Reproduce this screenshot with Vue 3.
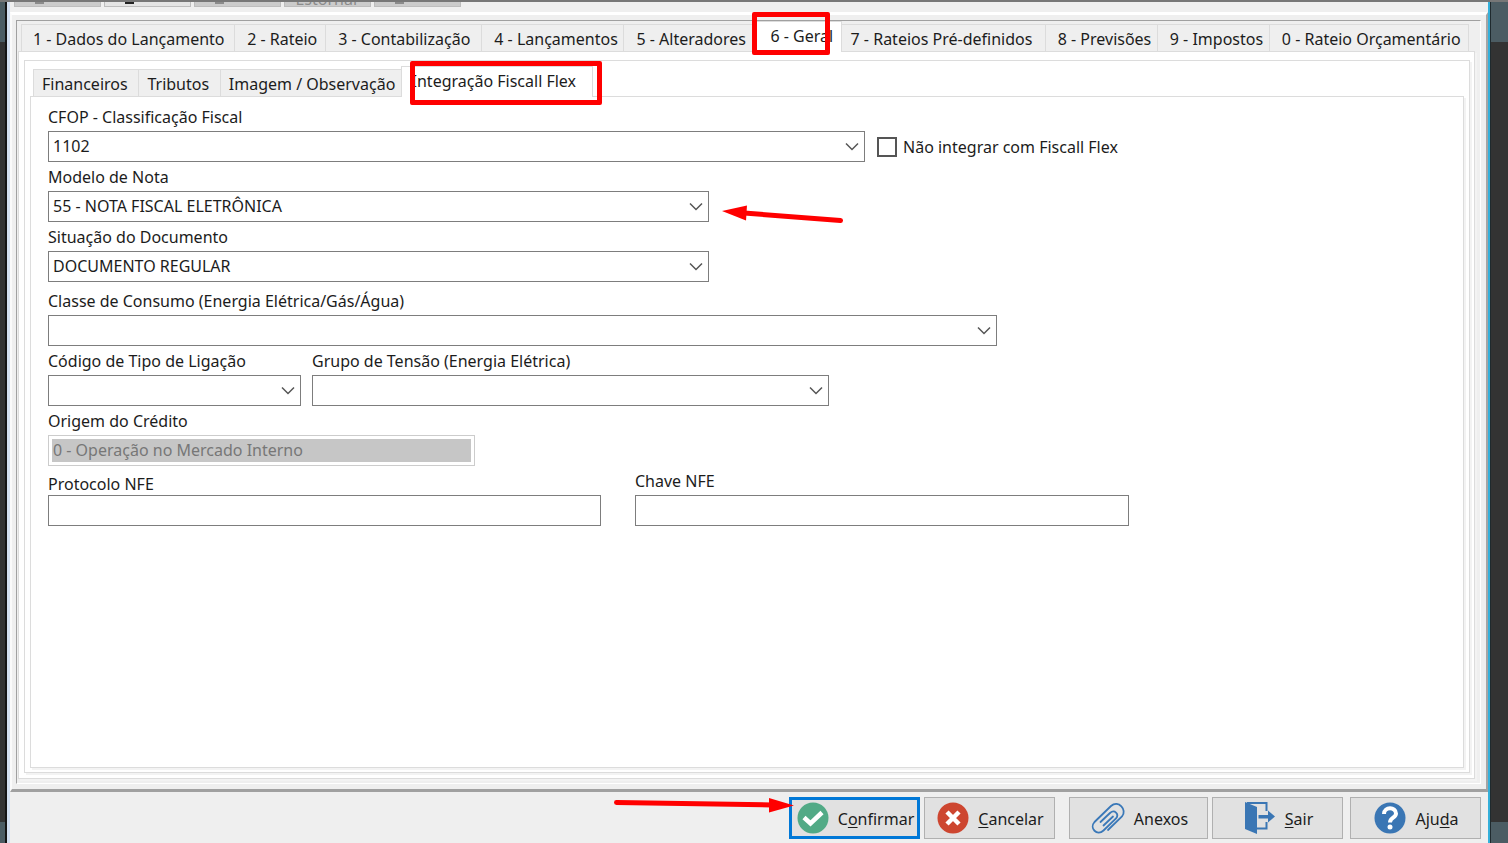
<template>
  <div class="desktop">
    <div class="backdrop backdrop-left"></div>
    <main class="window">
      <div class="toolbar">
        <button v-for="(item, i) in toolbar" :key="i" class="tool" :class="{ enabled: item.enabled }" :disabled="!item.enabled">
          <span v-if="item.label">{{ item.label }}</span>
          <span v-else class="mark"></span>
        </button>
      </div>

      <section class="workspace">
        <div class="frame">
          <div class="tabs main-tabs" role="tablist">
            <button
              v-for="tab in mainTabs"
              :key="tab"
              class="tab"
              :class="{ active: tab === mainTab }"
              role="tab"
              :aria-selected="tab === mainTab"
            >
              {{ tab }}
              <span v-if="tab === mainTab" class="highlight highlight-main"></span>
            </button>
          </div>

          <div class="panel">
            <div class="panel inner-panel">
              <div class="tabs sub-tabs" role="tablist">
                <button
                  v-for="tab in subTabs"
                  :key="tab"
                  class="tab"
                  :class="{ active: tab === subTab }"
                  role="tab"
                  :aria-selected="tab === subTab"
                >
                  {{ tab }}
                  <span v-if="tab === subTab" class="highlight highlight-sub"></span>
                </button>
              </div>

              <form class="panel form" @submit.prevent>
                <div class="row row-cfop">
                  <div class="field">
                    <label for="cfop">CFOP - Classificação Fiscal</label>
                    <div class="combo">
                      <select id="cfop"><option>1102</option></select>
                      <svg class="chevron" viewBox="0 0 14 9"><path d="M1 1.5 7 7.5 13 1.5" /></svg>
                    </div>
                  </div>
                  <label class="check">
                    <input v-model="skipFiscall" type="checkbox" />
                    Não integrar com Fiscall Flex
                  </label>
                </div>

                <div class="row row-medium">
                  <div class="field">
                    <label for="modelo">Modelo de Nota</label>
                    <div class="combo">
                      <select id="modelo"><option>55 - NOTA FISCAL ELETRÔNICA</option></select>
                      <svg class="chevron" viewBox="0 0 14 9"><path d="M1 1.5 7 7.5 13 1.5" /></svg>
                      <svg class="arrow arrow-left" viewBox="0 0 122 20">
                        <path d="M22 8 118.5 15.5" />
                        <polygon points="0,6 25,0.5 24,15.5" />
                      </svg>
                    </div>
                  </div>
                </div>

                <div class="row row-medium">
                  <div class="field">
                    <label for="situacao">Situação do Documento</label>
                    <div class="combo">
                      <select id="situacao"><option>DOCUMENTO REGULAR</option></select>
                      <svg class="chevron" viewBox="0 0 14 9"><path d="M1 1.5 7 7.5 13 1.5" /></svg>
                    </div>
                  </div>
                </div>

                <div class="row row-wide spaced">
                  <div class="field">
                    <label for="classe">Classe de Consumo (Energia Elétrica/Gás/Água)</label>
                    <div class="combo">
                      <select id="classe"><option></option></select>
                      <svg class="chevron" viewBox="0 0 14 9"><path d="M1 1.5 7 7.5 13 1.5" /></svg>
                    </div>
                  </div>
                </div>

                <div class="row row-energy">
                  <div class="field">
                    <label for="ligacao">Código de Tipo de Ligação</label>
                    <div class="combo">
                      <select id="ligacao"><option></option></select>
                      <svg class="chevron" viewBox="0 0 14 9"><path d="M1 1.5 7 7.5 13 1.5" /></svg>
                    </div>
                  </div>
                  <div class="field">
                    <label for="tensao">Grupo de Tensão (Energia Elétrica)</label>
                    <div class="combo">
                      <select id="tensao"><option></option></select>
                      <svg class="chevron" viewBox="0 0 14 9"><path d="M1 1.5 7 7.5 13 1.5" /></svg>
                    </div>
                  </div>
                </div>

                <div class="row row-origin">
                  <div class="field">
                    <label for="origem">Origem do Crédito</label>
                    <input id="origem" type="text" value="0 - Operação no Mercado Interno" disabled />
                  </div>
                </div>

                <div class="row row-nfe">
                  <div class="field tight">
                    <label for="protocolo">Protocolo NFE</label>
                    <input id="protocolo" v-model="protocolo" type="text" />
                  </div>
                  <div class="field">
                    <label for="chave">Chave NFE</label>
                    <input id="chave" v-model="chave" type="text" />
                  </div>
                </div>
              </form>
            </div>
          </div>
        </div>
      </section>

      <footer class="actions">
        <button class="action primary">
          <svg class="icon" viewBox="0 0 32 32">
            <circle cx="16" cy="16" r="15.5" fill="#52aa86" />
            <path d="M7 15.500 13.500 21.500 25 10.500" fill="none" stroke="#fff" stroke-width="4.500" />
          </svg>
          <span>C<u>o</u>nfirmar</span>
          <svg class="arrow arrow-right" viewBox="0 0 180 16">
            <path d="M2.5 5.5 158 8" />
            <polygon points="180,8.5 155,1 155,15.5" />
          </svg>
        </button>
        <button class="action">
          <svg class="icon" viewBox="0 0 32 32">
            <circle cx="16" cy="16" r="15.5" fill="#cd4630" />
            <path d="M10 10 22 22M22 10 10 22" fill="none" stroke="#fff" stroke-width="4.5" />
          </svg>
          <span><u>C</u>ancelar</span>
        </button>
        <button class="action attach">
          <svg class="icon icon-wide" viewBox="0 0 34 32">
            <path
              d="M17 28 31 14.500C36.500 8 27.500-2.500 20 4L3.500 20C-2 26 6 34.500 12.500 28.500L25 16.500C28.500 12 23.500 7 19 11L9.500 20M12.500 23.500 22 14.500"
              fill="none"
              stroke="#3a78b8"
              stroke-width="1.800"
              stroke-linecap="round"
            />
          </svg>
          <span>Anexos</span>
        </button>
        <button class="action">
          <svg class="icon" viewBox="0 0 32 32">
            <path d="M1 0 13 5V32L1 27Z" fill="#3a76b4" />
            <path d="M3 1H22.500V9M22.500 20V26.500H13" fill="none" stroke="#3a76b4" stroke-width="2" />
            <path d="M14.500 13H24V8.500L31 14.500 24 20.500V16.500H14.500Z" fill="#3a76b4" />
          </svg>
          <span><u>S</u>air</span>
        </button>
        <button class="action help">
          <svg class="icon" viewBox="0 0 32 32">
            <circle cx="16" cy="16" r="15.5" fill="#3a76b4" />
            <path d="M10 12C10 4.500 22 4.500 22 11.500C22 16 16 15.500 16 20.500" fill="none" stroke="#fff" stroke-width="4" />
            <circle cx="16" cy="25" r="2.500" fill="#fff" />
          </svg>
          <span>Aju<u>d</u>a</span>
        </button>
      </footer>
    </main>
    <div class="backdrop backdrop-right"></div>
  </div>
</template>

<script setup>
import { ref } from 'vue'

const toolbar = [
  { enabled: false },
  { enabled: true },
  { enabled: false },
  { enabled: false, label: 'Estornar' },
  { enabled: false }
]

const mainTabs = [
  '1 - Dados do Lançamento',
  '2 - Rateio',
  '3 - Contabilização',
  '4 - Lançamentos',
  '5 - Alteradores',
  '6 - Geral',
  '7 - Rateios Pré-definidos',
  '8 - Previsões',
  '9 - Impostos',
  '0 - Rateio Orçamentário'
]
const subTabs = ['Financeiros', 'Tributos', 'Imagem / Observação', 'Integração Fiscall Flex']

const mainTab = ref('6 - Geral')
const subTab = ref('Integração Fiscall Flex')

const skipFiscall = ref(false)
const protocolo = ref('')
const chave = ref('')
</script>

<style>
body {
  margin: 0;
}
</style>

<style scoped>
.desktop {
  display: flex;
  box-sizing: border-box;
  min-height: 100vh;
  border-top: 2px solid #777;
  font-family: "Noto Sans", "Open Sans", sans-serif;
  font-size: 16px;
  line-height: 20px;
  color: #1c1c1c;
  overflow: hidden;
}

.desktop *,
.desktop *::before {
  box-sizing: border-box;
}

button,
input,
select {
  margin: 0;
  font: inherit;
  color: inherit;
}

.backdrop {
  flex: none;
  background: linear-gradient(#4b5c63 40px, #333 40px, #333 calc(100% - 21px), #4b5c63 calc(100% - 21px));
}

.backdrop-left {
  width: 7px;
  border-right: 2px solid #141414;
}

.backdrop-right {
  width: 18px;
  border-left: 1px solid #1f2a2e;
}

.window {
  flex: 1;
  min-width: 0;
  display: flex;
  flex-direction: column;
  background: #efefef;
  border-left: 3px solid #d3dff0;
  border-right: 2px solid #35b0da;
}

/* Toolbar is scrolled out of view, only the bottom edge of the buttons shows */
.toolbar {
  display: flex;
  align-items: flex-end;
  gap: 3px;
  height: 10px;
  padding: 0 4px 5px;
  overflow: hidden;
}

.tool {
  display: flex;
  align-items: flex-end;
  justify-content: center;
  flex: none;
  width: 87px;
  height: 28px;
  padding: 0;
  border: 1px solid #bdbdbd;
  background: #cbcbcb;
  color: #8b8b8b;
  line-height: 14px;
}

.tool.enabled {
  background: #e4e4e4;
  color: #222;
}

.mark {
  width: 9px;
  height: 2px;
  margin: 0 36px 2px 0;
  background: currentColor;
}

.workspace {
  flex: 1;
  display: flex;
  padding: 5px 5px 5px 4px;
  border-style: solid;
  border-width: 3px 2px 3px 2px;
  border-color: #fff #a5a5a5 #a0a0a0 #fafafa;
}

.frame {
  flex: 1;
  min-width: 0;
  display: flex;
  flex-direction: column;
  border-style: solid;
  border-width: 1px;
  border-color: #a0a0a0 #fff #fff #a0a0a0;
}

.tabs {
  display: grid;
}

.tab {
  position: relative;
  min-width: 0;
  height: 27px;
  padding: 2px 0 0 12px;
  border: 1px solid #dcdcdc;
  border-width: 1px 1px 0 0;
  background: #efefef;
  text-align: left;
  white-space: nowrap;
}

.tab:first-child {
  padding-left: 11px;
  border-left-width: 1px;
}

.tab.active {
  z-index: 1;
  height: 31px;
  margin: -3px -3px -1px;
  padding: 0 0 2px 14px;
  border-left-width: 1px;
  background: #fff;
}

.main-tabs {
  grid-template-columns: 214fr 91fr 156fr 142fr 134fr 80fr 207fr 112fr 112fr 199fr;
  padding: 3px 11px 0 4px;
}

.sub-tabs {
  grid-template-columns: 106fr 81fr 182fr 186fr 875fr;
  padding: 8px 0 0 8px;
}

.sub-tabs .tab {
  padding-left: 8px;
}

.sub-tabs .tab.active {
  padding-left: 10px;
}

.highlight {
  position: absolute;
  border: 5px solid #f00;
  border-radius: 2px;
}

.highlight-main {
  top: -10px;
  left: -5px;
  width: 78px;
  height: 43px;
}

.highlight-sub {
  top: -6px;
  left: 8px;
  width: 192px;
  height: 44px;
}

.panel {
  flex: 1;
  display: flex;
  flex-direction: column;
  margin: 0 5px 4px 1px;
  border: 1px solid #dcdcdc;
  background: #fff;
  box-shadow: 2px 2px 0 #f3f3f3;
}

.inner-panel {
  margin: 8px 4px 5px 5px;
}

.form {
  margin: 0 5px 4px 5px;
  gap: 5px;
  padding: 10px 15px 10px 17px;
}

.row {
  display: grid;
  align-items: end;
}

.spaced {
  margin-top: 4px;
}

.row-cfop {
  grid-template-columns: 817fr 583fr;
}

.row-medium {
  grid-template-columns: 661fr 739fr;
}

.row-wide {
  grid-template-columns: 949fr 451fr;
}

.row-energy {
  grid-template-columns: 253fr 517fr 608fr;
  column-gap: 11px;
}

.row-origin {
  grid-template-columns: 427fr 973fr;
}

.row-nfe {
  grid-template-columns: 553fr 494fr 285fr;
  column-gap: 34px;
}

.field {
  display: flex;
  flex-direction: column;
  gap: 4px;
  min-width: 0;
}

.field.tight {
  gap: 1px;
}

.combo {
  position: relative;
}

select,
input[type="text"] {
  display: block;
  appearance: none;
  width: 100%;
  height: 31px;
  padding: 0 4px 2px;
  border: 1px solid #7d7d7d;
  border-radius: 0;
  outline: none;
  background: #fff;
  color: #1c1c1c;
}

/* Grey fill stays inside the frame, as on a disabled combo */
input[type="text"]:disabled {
  border-color: #ccc;
  background: #c6c6c6;
  box-shadow: inset 0 0 0 3px #fff;
  color: #777;
}

.chevron {
  position: absolute;
  top: 11px;
  right: 6px;
  width: 14px;
  height: 9px;
  fill: none;
  stroke: #555;
  stroke-width: 1.5;
}

.check {
  display: flex;
  align-items: center;
  gap: 6px;
  height: 31px;
  padding-left: 12px;
  white-space: nowrap;
}

.check input {
  appearance: none;
  width: 20px;
  height: 20px;
  border: 2px solid #555;
  background: #fff;
}

.check input:checked {
  background: #444;
}

.arrow {
  position: absolute;
  overflow: visible;
  pointer-events: none;
}

.arrow path {
  fill: none;
  stroke: #f00;
  stroke-width: 5;
  stroke-linecap: round;
}

.arrow polygon {
  fill: #f00;
}

.arrow-left {
  top: 14px;
  left: calc(100% + 13px);
  width: 122px;
  height: 20px;
}

.arrow-right {
  top: -3px;
  right: 123px;
  width: 180px;
  height: 16px;
}

.actions {
  display: flex;
  justify-content: flex-end;
  gap: 4px;
  padding: 5px 7px 4px;
}

.action {
  position: relative;
  display: flex;
  align-items: center;
  justify-content: center;
  gap: 9px;
  width: 131px;
  height: 42px;
  padding: 0 0 0 2px;
  border: 1px solid #b0b0b0;
  background: #e1e1e1;
}

.action.primary {
  border: 3px solid #0078d7;
}

.action.attach {
  width: 139px;
  margin-left: 10px;
}

.action.help {
  margin-left: 3px;
}

.action span {
  padding-top: 2px;
}

.action u {
  text-underline-offset: 2px;
}

.icon {
  flex: none;
  width: 32px;
  height: 32px;
}

.icon-wide {
  width: 34px;
}
</style>
